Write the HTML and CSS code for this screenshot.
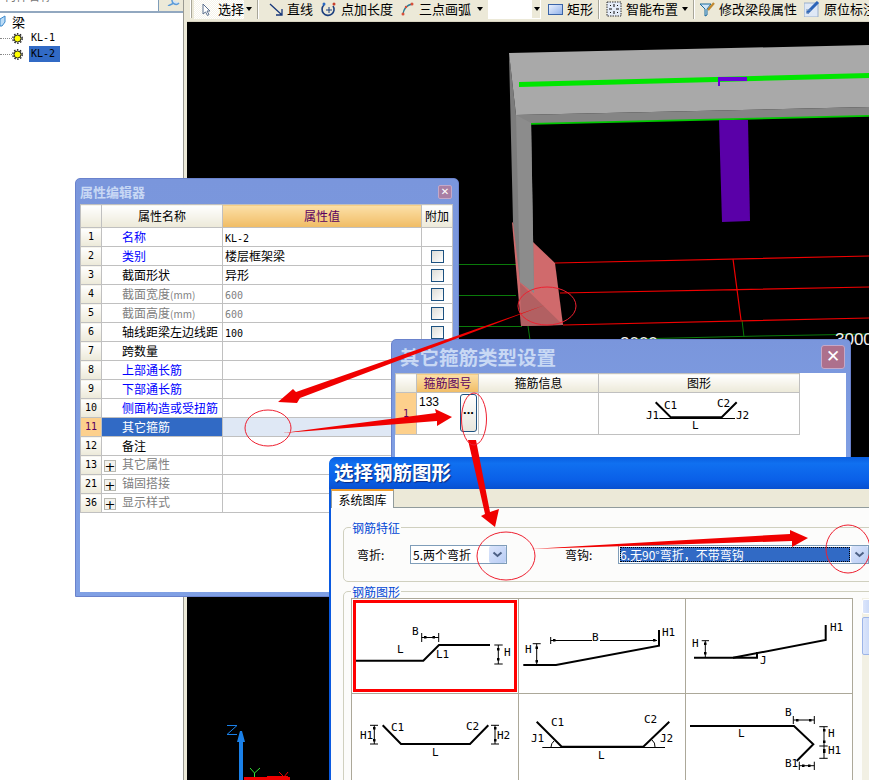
FILE: index.html
```html
<!DOCTYPE html>
<html lang="zh">
<head>
<meta charset="utf-8">
<title>属性编辑器</title>
<link rel="stylesheet" href="styles.css">
</head>
<body>
<div class="app">
  <aside class="side">
    <div class="search">
      <div class="search-input"><span class="search-text">构件名称</span></div>
      <div class="search-btn">
        <svg class="mag" width="16" height="6" viewBox="0 0 16 6"><path d="M7 0a4 4 0 0 0 7 3M9 3L3 6" fill="#cfe2f8" stroke="#5b9bd8" stroke-width="1.5"/></svg>
      </div>
    </div>
    <div class="tree">
      <div class="tree-row root">
        <svg class="root-icon" width="6" height="12" viewBox="0 0 6 12"><path d="M0 4l5-3v6l-3 4H0z" fill="#bcdcf6" stroke="#3a88cc"/></svg>
        <span>梁</span>
      </div>
      <div class="tree-row">
        <span class="dots"></span>
        <svg width="11" height="11" viewBox="0 0 11 11"><circle cx="5.500" cy="5.500" r="3.500" fill="#ffff00" stroke="#222"/><circle cx="5.500" cy="5.500" r="4.700" fill="none" stroke="#222" stroke-width="1.400" stroke-dasharray="1.500 1.500"/></svg>
        <span class="leaf lat">KL-1</span>
      </div>
      <div class="tree-row">
        <span class="dots"></span>
        <svg width="11" height="11" viewBox="0 0 11 11"><circle cx="5.500" cy="5.500" r="3.500" fill="#ffff00" stroke="#222"/><circle cx="5.500" cy="5.500" r="4.700" fill="none" stroke="#222" stroke-width="1.400" stroke-dasharray="1.500 1.500"/></svg>
        <span class="leaf picked lat">KL-2</span>
      </div>
    </div>
  </aside>
  <main class="main">
    <div class="toolbar">
      <span class="grip"></span>
      <span class="tool-select">
        <svg width="9" height="13" viewBox="0 0 9 13"><path d="M1 1v10l2.500-2 2 3.500 1.500-1-2-3.500h3z" fill="#fff" stroke="#5a6e8c"/></svg>
        <span class="tl">选择</span>
      </span>
      <span class="caret c-select"></span>
      <span class="sep s1"></span>
      <span class="tool t-line">
        <svg width="14" height="13" viewBox="0 0 14 13"><path d="M1 1l12 11M13 6v6H7" fill="none" stroke="#17377a" stroke-width="1.300"/></svg>
        <span class="tl">直线</span>
      </span>
      <span class="tool t-len">
        <svg width="16" height="15" viewBox="0 0 16 15"><path d="M3 3a6 6 0 1 0 9 1" fill="none" stroke="#1c3f7e" stroke-width="1.600"/><path d="M5 8h6M8 5v6" stroke="#1c3f7e"/><circle cx="3" cy="2" r="1.500" fill="#2b6cc4"/><circle cx="13" cy="2" r="1.500" fill="#c8402c"/></svg>
        <span class="tl">点加长度</span>
      </span>
      <span class="tool t-arc">
        <svg width="13" height="14" viewBox="0 0 13 14"><path d="M2 12C3 6 6 3 11 2" fill="none" stroke="#2c7c94" stroke-width="1.300"/><circle cx="2" cy="12" r="1.500" fill="#d8503c"/><circle cx="5" cy="5" r="1.200" fill="#d8503c"/><circle cx="11" cy="2" r="1.500" fill="#d8503c"/></svg>
        <span class="tl tl-arc">三点画弧</span>
      </span>
      <span class="caret c-arc"></span>
      <span class="tool-combo"><span class="combo-fill"></span><span class="caret"></span></span>
      <span class="tool t-rect">
        <svg width="15" height="11" viewBox="0 0 15 11"><defs><linearGradient id="rectfill" x1="0" y1="0" x2="1" y2="1"><stop offset="0" stop-color="#eef3fd"/><stop offset="1" stop-color="#8fb0ea"/></linearGradient></defs><rect x=".5" y=".5" width="14" height="10" fill="url(#rectfill)" stroke="#3a64a8"/></svg>
        <span class="tl">矩形</span>
      </span>
      <span class="sep s2"></span>
      <span class="tool t-smart">
        <svg width="16" height="16" viewBox="0 0 16 16"><rect x="1" y="1" width="14" height="14" fill="#e4ecf8" stroke="#333" stroke-dasharray="1.500 1"/><path d="M8 3v3M8 10v3M3 8h3M10 8h3M4 4l1 1M12 4l-1 1M4 12l1-1M12 12l-1-1" stroke="#111"/></svg>
        <span class="tl">智能布置</span>
      </span>
      <span class="caret c-smart"></span>
      <span class="sep s3"></span>
      <span class="tool t-edit">
        <svg width="16" height="16" viewBox="0 0 16 16"><path d="M1 3h11L8 8v6L6 15V8z" fill="#cfe6f8" stroke="#1a6a9a"/><path d="M9 9l6-7" stroke="#c08830" stroke-width="2.200"/></svg>
        <span class="tl">修改梁段属性</span>
      </span>
      <span class="tool t-note">
        <svg width="16" height="16" viewBox="0 0 16 16"><rect x="0" y="2" width="14" height="14" fill="#dfe8f6" stroke="#9ab0cc"/><path d="M3 12L14 1" stroke="#2c64b8" stroke-width="3"/><path d="M2 9h5M2 12h3" stroke="#7090b8"/></svg>
        <span class="tl">原位标注</span>
      </span>
    </div>
    <div class="viewport">
      <svg class="scene" viewBox="187 22 682 758" preserveAspectRatio="xMinYMin slice">
        <g fill="none" stroke="#0a7a0a">
          <path d="M459 264.500H516M459 295.500H516M459 326.500H522M528 326l2 14M742 320l2 17M633 339L760 336L869 334"/>
        </g>
        <g fill="none" stroke="#f00000" stroke-width="1.200">
          <path d="M555 263L869 256M560 293L869 287M563 325L869 318M733 259L741 320"/>
        </g>
        <polygon class="pink" points="512,222 533,242 555,263 563,325 521,326"/>
        <polygon class="pink-dark" points="520,283 563,325 521,326"/>
        <polygon class="col-side" points="509,53 516,115 531,123 534,293 520,282 513,222"/>
        <polygon class="col-front" points="516,115 531,115 534,293 520,282"/>
        <path d="M531 123.500L869 115.500" stroke="#00c800" stroke-width="2.500"/>
        <polygon class="beam-under" points="516,115 869,107 869,115 531,123"/>
        <polygon class="beam-top" points="509,53 869,45 869,107 516,115"/>
        <polygon class="bar-green" points="519,82 869,73 869,78 519,87"/>
        <polygon class="bar-purple" points="718,77 747,77 747,81 720,81 720,86 718,86"/>
        <polygon class="col-purple" points="719,120 748,120 750,221 722,222"/>
        <text class="dim-num" x="620" y="349">3000</text>
        <text class="dim-num" x="835" y="345">3000</text>
        <g>
          <path class="axis-blue" d="M239 780V742H237L240 731H242L245 742H243V780Z"/>
          <path class="axis-z" d="M227 725.500H237L227 734.500H237" fill="none"/>
          <path d="M250 768L254.500 773L260 768M254.500 773V777" fill="none" stroke="#33e033"/>
          <path d="M244 777H267V776H288V777H290V780H244Z" fill="#f00000"/>
          <path d="M279 772L284 777L288 772" fill="none" stroke="#f00000"/>
        </g>
      </svg>
    </div>
  </main>
</div>

<section class="win win-props">
  <header class="win-title">
    <h1>属性编辑器</h1>
    <span class="close small">✕</span>
  </header>
  <div class="win-body">
    <table class="grid props">
      <colgroup><col class="c-num"><col class="c-name"><col class="c-val"><col class="c-add"></colgroup>
      <thead>
        <tr><th></th><th>属性名称</th><th class="hot">属性值</th><th>附加</th></tr>
      </thead>
      <tbody>
        <tr><th class="lat">1</th><td class="name blue">名称</td><td><span class="lat">KL-2</span></td><td></td></tr>
        <tr><th class="lat">2</th><td class="name blue">类别</td><td>楼层框架梁</td><td><span class="check"></span></td></tr>
        <tr><th class="lat">3</th><td class="name">截面形状</td><td>异形</td><td><span class="check"></span></td></tr>
        <tr><th class="lat">4</th><td class="name gray">截面宽度<span class="unit">(mm)</span></td><td class="gray"><span class="lat">600</span></td><td><span class="check"></span></td></tr>
        <tr><th class="lat">5</th><td class="name gray">截面高度<span class="unit">(mm)</span></td><td class="gray"><span class="lat">600</span></td><td><span class="check"></span></td></tr>
        <tr><th class="lat">6</th><td class="name">轴线距梁左边线距</td><td><span class="lat">100</span></td><td><span class="check"></span></td></tr>
        <tr><th class="lat">7</th><td class="name">跨数量</td><td></td><td></td></tr>
        <tr><th class="lat">8</th><td class="name blue">上部通长筋</td><td></td><td></td></tr>
        <tr><th class="lat">9</th><td class="name blue">下部通长筋</td><td></td><td></td></tr>
        <tr><th class="lat">10</th><td class="name blue">侧面构造或受扭筋</td><td></td><td></td></tr>
        <tr class="current"><th class="lat">11</th><td class="name">其它箍筋</td><td></td><td></td></tr>
        <tr><th class="lat">12</th><td class="name">备注</td><td></td><td></td></tr>
        <tr><th class="lat">13</th><td class="group-name gray"><span class="plus">+</span>其它属性</td><td></td><td></td></tr>
        <tr><th class="lat">21</th><td class="group-name gray"><span class="plus">+</span>锚固搭接</td><td></td><td></td></tr>
        <tr><th class="lat">36</th><td class="group-name gray"><span class="plus">+</span>显示样式</td><td></td><td></td></tr>
      </tbody>
    </table>
  </div>
</section>

<section class="win win-type">
  <header class="win-title">
    <h1>其它箍筋类型设置</h1>
    <span class="close big">✕</span>
  </header>
  <div class="win-body">
    <table class="grid types">
      <colgroup><col class="c-num"><col class="c-no"><col class="c-info"><col class="c-shape"></colgroup>
      <thead>
        <tr><th></th><th class="hot">箍筋图号</th><th>箍筋信息</th><th>图形</th></tr>
      </thead>
      <tbody>
        <tr>
          <th class="row-hot lat">1</th>
          <td class="no-cell"><span class="no">133</span><span class="more">...</span></td>
          <td></td>
          <td class="shape-cell">
            <svg class="shape" viewBox="599 393 200 41">
              <path class="bar" d="M655.700 402.300L670.700 417.300H721.700L736.700 402.300"/>
              <path class="thin" d="M659.300 418.500H735"/>
              <text x="664" y="409">C1</text><text x="717" y="407">C2</text>
              <text x="646" y="419">J1</text><text x="736" y="419">J2</text><text x="692" y="429">L</text>
            </svg>
          </td>
        </tr>
      </tbody>
    </table>
  </div>
</section>

<section class="win-xp">
  <header class="xp-title"><h1>选择钢筋图形</h1></header>
  <div class="xp-body">
    <nav class="tabs"><span class="tab">系统图库</span></nav>
    <div class="pane">
      <div class="box box-feature">
        <span class="legend">钢筋特征</span>
        <div class="fields">
          <label class="f-label">弯折:</label>
          <span class="combo c1"><span class="combo-val">5.两个弯折</span><span class="drop"><svg width="11" height="7" viewBox="0 0 11 7"><path d="M1.500 1.500l4 3.500 4-3.500" fill="none" stroke="#4d6185" stroke-width="2"/></svg></span></span>
          <label class="f-label l2">弯钩:</label>
          <span class="combo c2"><span class="combo-val sel-val">6.无90°弯折，不带弯钩</span><span class="drop"><svg width="11" height="7" viewBox="0 0 11 7"><path d="M1.500 1.500l4 3.500 4-3.500" fill="none" stroke="#4d6185" stroke-width="2"/></svg></span></span>
        </div>
      </div>
      <div class="box box-shapes">
        <span class="legend">钢筋图形</span>
        <div class="shape-area">
          <div class="shape-grid">
            <div class="cell sel">
              <svg class="shape" viewBox="352 599 166 94">
                <path class="bar" d="M356 660.700H423.300L439 645H490"/>
                <path class="thin" d="M421.700 633V642M438.700 633V642M421.700 637.500H438.700M494.300 645H502.700M494.300 664H502.700M498.300 645V664"/>
                <path class="dot" d="M424 636h2.500v2.500H424zM432.500 636h2.500v2.500h-2.500zM497 648h2.500v2.500H497zM497 658h2.500v2.500H497z"/>
                <text x="397" y="653">L</text><text x="412" y="635">B</text><text x="436" y="658">L1</text><text x="504" y="656">H</text>
              </svg>
            </div>
            <div class="cell">
              <svg class="shape" viewBox="519 599 166 94">
                <path class="bar" d="M523.300 665H556L659 645.700V630"/>
                <path class="thin" d="M550.700 637V644M550.700 640.500H592M600 640.500H657M532.700 643.700H540.700M536.700 643.700V664"/>
                <path class="dot" d="M553 639h2.500v2.500H553zM653 639h2.500v2.500H653zM535.500 646.500H538V649h-2.500zM535.500 660H538v2.500h-2.500z"/>
                <text x="592" y="641">B</text><text x="662" y="636">H1</text><text x="525" y="653">H</text>
              </svg>
            </div>
            <div class="cell">
              <svg class="shape" viewBox="686 599 166 94">
                <path class="bar" d="M694 657.700H733L825.700 640V625"/>
                <path class="bar" d="M733 657.700H757V652"/>
                <path class="thin" d="M701.700 640.700H709M705.300 640.700V657"/>
                <path class="dot" d="M704 642.500h2.500V645H704zM704 652h2.500v2.500H704z"/>
                <text x="692" y="647">H</text><text x="830" y="631">H1</text><text x="760" y="664">J</text>
              </svg>
            </div>
            <div class="cell">
              <svg class="shape" viewBox="352 694 166 94">
                <path class="bar" d="M382.700 725.300L401 744H470L488.300 725.300"/>
                <path class="thin" d="M370 725.300H378M370 744H378M374.300 725.300V744M491 725.300H499M491 744H499M495 725.300V744"/>
                <path class="dot" d="M373 727h2.500v2.500H373zM373 739h2.500v2.500H373zM494 727h2.500v2.500H494zM494 739h2.500v2.500H494z"/>
                <text x="360" y="739">H1</text><text x="391" y="731">C1</text><text x="466" y="730">C2</text><text x="497" y="739">H2</text><text x="432" y="756">L</text>
              </svg>
            </div>
            <div class="cell">
              <svg class="shape" viewBox="519 694 166 94">
                <path class="bar" d="M536.700 721.700L561.700 746.700H643.300L669.300 721.700"/>
                <path class="thin" d="M542.300 747.500H665M551 747a8 8 0 0 1 3-6M652 740a8 8 0 0 1 3 7"/>
                <text x="551" y="726">C1</text>
                <text x="644" y="723">C2</text><text x="531" y="742">J1</text><text x="660" y="742">J2</text><text x="598" y="759">L</text>
              </svg>
            </div>
            <div class="cell">
              <svg class="shape" viewBox="686 694 166 94">
                <path class="bar" d="M690 726H794L813.300 744.300L796.700 761"/>
                <path class="thin" d="M793.300 716V724M814.300 716V724M793.300 720H814.300M819.300 726.700H827.700M819.300 746H827.700M819.300 758.300H827.700M824 726.700V758.300M799.300 761.700V770M814.300 761.700V770M799.300 765.700H814.300"/>
                <path class="dot" d="M796 719h2.500v2.500H796zM809 719h2.500v2.500H809zM823 729h2.500v2.500H823zM823 740.500h2.500v2.500H823zM823 749h2.500v4H823zM802 764.500h2.500v2.500H802zM808 764.500h2.500v2.500H808z"/>
                <text x="785" y="716">B</text><text x="738" y="737">L</text><text x="828" y="737">H</text><text x="828" y="754">H1</text><text x="785" y="767">B1</text>
              </svg>
            </div>
          </div>
          <div class="scrollbar"><span class="sb-up"></span><span class="sb-thumb"></span></div>
        </div>
      </div>
    </div>
  </div>
</section>

<svg class="notes" viewBox="0 0 869 780">
  <polygon points="278,402 293,389 296,392 545,305 300,398 297,403"/>
  <polygon points="283,433 436,413 435,409 452,417 437,426 437,421"/>
  <polygon points="468,440 476,440 490,512 499,509 495,527 481,516 485,514"/>
  <polygon points="530,549 790,534 790,530 808,538 792,547 792,541"/>
  <ellipse cx="547" cy="306" rx="29" ry="19"/>
  <ellipse cx="268" cy="428" rx="23" ry="18"/>
  <ellipse cx="474" cy="419" rx="12.500" ry="26"/>
  <ellipse cx="506" cy="556" rx="29" ry="24"/>
  <ellipse cx="848" cy="549" rx="22" ry="24"/>
</svg>
</body>
</html>
```

FILE: styles.css
```css
* { box-sizing: border-box; }
html, body { margin: 0; padding: 0; width: 869px; height: 780px; overflow: hidden; }
body {
  position: relative;
  background: #fff;
  font: 12px/1 "Noto Sans CJK SC", "Liberation Sans", sans-serif;
  color: #000;
}
h1 { margin: 0; font-weight: 700; }
.lat { font-family: "DejaVu Sans Mono", "Liberation Mono", monospace; font-size: 10px; }

.app { display: flex; width: 869px; height: 780px; }

/* left tree */
.side { width: 187px; display: flex; flex-direction: column; background: #fff; border-right: 3px solid #ece9d8; box-shadow: inset -1px 0 0 #9a9a92; }
.search { display: flex; height: 13px; border-bottom: 2px solid #92a8c0; margin-right: 1px; }
.search-input { width: 159px; overflow: hidden; border-right: 1px solid #7f9db9; }
.search-text { display: block; margin: -10px 0 0 4px; line-height: 12px; color: #777; }
.search-btn { flex: 1; background: #ece9d8; overflow: hidden; padding-left: 6px; }
.mag { display: block; }
.tree { font-size: 13px; }
.tree-row { display: flex; align-items: center; height: 16px; }
.tree-row.root { margin-bottom: 1px; }
.tree-row.root span { margin-left: 6px; }
.dots { width: 12px; border-top: 1px dotted #888; }
.leaf { margin-left: 6px; padding: 3px 2px; line-height: 10px; }
.picked { background: #316ac5; width: 31px; height: 16px; }

/* toolbar */
.main { flex: 1; display: flex; flex-direction: column; min-width: 0; }
.toolbar { height: 22px; flex: none; padding-bottom: 3px; display: flex; align-items: center; background: #ece9d8; border-bottom: 1px solid #d8d4c2; font-size: 13px; white-space: nowrap; overflow: hidden; }
.grip { width: 3px; height: 18px; margin-left: 3px; border-left: 1px solid #fff; border-right: 1px solid #a8a699; }
.tool-select { display: flex; align-items: center; width: 53px; height: 19px; margin-left: 2px; padding-left: 8px; background: repeating-conic-gradient(#f5f3ea 0 25%, #fff 0 50%) 0 0 / 2px 2px; }
.tool-select .tl { margin-left: 7px; }
.tool { display: flex; align-items: center; flex: none; }
.tl { margin-left: 4px; line-height: 18px; }
.tl-arc { margin-left: 5px; }
.caret { display: block; width: 0; height: 0; flex: none; border: 3px solid transparent; border-top: 4px solid #000; border-bottom: 0; }
.c-select { margin-left: 2px; }
.c-arc { margin-left: 6px; }
.c-smart { margin-left: 4px; }
.sep { flex: none; width: 2px; height: 20px; border-left: 1px solid #a8a699; border-right: 1px solid #fff; }
.s1 { margin-left: 5px; }
.s2 { margin-left: 5px; }
.s3 { margin-left: 5px; }
.t-line { margin-left: 10px; }
.t-len { margin-left: 8px; }
.t-arc { margin-left: 8px; }
.t-rect { margin-left: 7px; }
.t-smart { margin-left: 6px; }
.t-edit { margin-left: 4px; }
.t-note { margin-left: 7px; }
.tool-combo { display: flex; align-items: center; width: 54px; height: 19px; margin-left: 5px; background: #ece9d8; border-right: 1px solid #fff; border-bottom: 1px solid #fff; }
.combo-fill { width: 44px; height: 19px; background: #fff; }
.tool-combo .caret { margin-left: 2px; }

/* 3D viewport */
.viewport { flex: 1; background: #000; min-height: 0; }
.scene { display: block; width: 682px; height: 758px; }
.pink { fill: #d06a6c; }
.pink-dark { fill: #b26062; }
.col-side { fill: #7c7c7c; }
.col-front { fill: #8c8c8c; }
.beam-under { fill: #858585; }
.beam-top { fill: #a9a9a9; }
.bar-green { fill: #00e600; }
.bar-purple { fill: #6a00d8; }
.col-purple { fill: #5a00a8; }
.dim-num { fill: #f0f0f0; font: 17px "Liberation Sans", sans-serif; }
.axis-blue { fill: #1a80e8; }
.axis-z { stroke: #1a80e8; stroke-width: 1; }

/* translucent windows */
.win { position: absolute; display: flex; flex-direction: column; background: linear-gradient(#7a96dc, #80a0e4); border: 1px solid #6a82cc; border-radius: 5px 5px 0 0; }
.win-title { display: flex; align-items: center; justify-content: space-between; flex: none; color: #c8d8f4; }
.win-body { flex: 1; background: #fff; }
.close { display: flex; align-items: center; justify-content: center; color: #fff; font-family: "DejaVu Sans", sans-serif; font-weight: 700; background: #a97fa4; border: 1px solid #c4a8c8; }
.close.small { width: 14px; height: 14px; font-size: 10px; border-radius: 2px; }
.close.big { width: 24px; height: 24px; font-size: 17px; border-radius: 3px; background: #ad708c; }

.win-props { left: 75px; top: 178px; width: 384px; height: 419px; padding: 0 5px 4px 4px; }
.win-props .win-title { height: 25px; }
.win-props h1 { font-size: 13px; }
.win-props .close { margin-right: 1px; }

.win-type { left: 391px; top: 339px; width: 460px; height: 130px; padding: 0 4px 0 3px; }
.win-type .win-title { height: 33px; padding: 0 0 0 5px; }
.win-type h1 { font-size: 19.500px; }
.win-type .close { margin-right: 1px; }

/* data grids */
.grid { border-collapse: collapse; table-layout: fixed; }
.grid th, .grid td { border: 1px solid #c0c0c0; padding: 0; overflow: hidden; white-space: nowrap; font-weight: 400; }
.grid thead th { height: 23px; background: linear-gradient(#fff, #ece9d8); text-align: center; }
.grid thead th.hot { background: linear-gradient(#fce0a8, #f0bc64); color: #5a0060; }
.grid tbody th { background: linear-gradient(#fff, #ece9d8); text-align: center; }
.grid tbody td { padding-left: 2px; }
.props { width: 373px; }
.props tbody tr { height: 19px; }
.c-num { width: 21px; }
.c-name { width: 121px; }
.c-val { width: 199px; }
.c-add { width: 31px; }
.props tbody td.name { padding-left: 20px; }
.group-name { padding-left: 2px; }
.blue { color: #0000ff; }
.gray { color: #808080; }
.unit { font-size: 10px; }
.plus { display: inline-flex; align-items: center; justify-content: center; width: 12px; height: 12px; margin-right: 6px; background: #f4f3ee; border: 1px solid #b8b8b0; color: #000; font: 13px/1 "DejaVu Sans", sans-serif; vertical-align: -2px; }
.check { display: block; width: 13px; height: 13px; margin-left: 7px; border: 1px solid #1c5180; background: linear-gradient(135deg, #dcdcd7, #fff); }
.current th { background: #fdd08c !important; color: #5a0060; }
.current td.name { background: #316ac5; color: #fff; }
.current td { background: #dfe8f5; }

.types { width: 405px; }
.c-no { width: 62px; }
.c-info { width: 120px; }
.c-shape { width: 201px; }
.types thead th { height: 19px; }
.types tbody tr { height: 42px; }
.grid tbody th.row-hot { background: #fdd08c; color: #5a0060; vertical-align: bottom; padding-bottom: 15px; }
.no-cell { position: relative; vertical-align: top; }
.no { display: block; padding-top: 2px; font: 12px "Liberation Sans", sans-serif; }
.more { position: absolute; left: 43px; top: 1px; width: 17px; height: 38px; display: flex; align-items: center; justify-content: center; padding-bottom: 8px; border: 1px solid #1c5180; border-radius: 3px; background: linear-gradient(#fff, #e8e6dc); font: 700 13px "Liberation Sans", sans-serif; }
.types tbody td.shape-cell { padding: 0; }
.shape { display: block; width: 100%; height: 100%; }
.shape text { font: 11px "DejaVu Sans Mono", "Liberation Mono", monospace; fill: #000; }
.bar { fill: none; stroke: #000; stroke-width: 2; }
.thin { fill: none; stroke: #000; stroke-width: 1; }
.dot { fill: #000; }

/* XP dialog */
.win-xp { position: absolute; left: 329px; top: 457px; width: 560px; height: 323px; overflow: hidden; display: flex; flex-direction: column; border-radius: 7px 7px 0 0; background: #0a5ae0; padding: 0 0 0 2px; }
.xp-title { flex: none; height: 32px; display: flex; align-items: center; padding: 0 0 2px 5px; background: linear-gradient(#0a5ee0 0, #1070f0 20%, #0a60e8 70%, #0850d0 100%); border-radius: 7px 7px 0 0; margin-left: -2px; }
.xp-title h1 { font-size: 19.500px; color: #fff; text-shadow: 1px 1px 1px #0a2a80; }
.xp-body { flex: 1; min-height: 0; background: #fff; overflow: hidden; }
.tabs { height: 19px; background: #ece9d8; border-bottom: 1px solid #919b9c; }
.tab { display: block; width: 63px; height: 19px; padding-top: 3px; text-align: center; background: #fff; border-top: 2px solid #f0a030; border-left: 1px solid #919b9c; border-right: 1px solid #919b9c; }
.pane { padding: 19px 0 0 12px; background: #fcfcfb; height: 300px; }
.box { position: relative; border: 1px solid #d0d0bf; border-radius: 5px; }
.legend { position: absolute; top: -7px; left: 7px; padding: 0 1px; background: #fcfcfb; color: #0046d5; line-height: 13px; }
.box-feature { height: 55px; margin-bottom: 9px; }
.fields { display: flex; align-items: center; height: 19px; margin-top: 17px; padding-left: 13px; }
.f-label { width: 53px; }
.f-label.l2 { width: 53px; margin-left: 58px; }
.combo { display: flex; align-items: center; height: 19px; background: #fff; border: 1px solid #7f9db9; flex: none; }
.combo.c1 { width: 97px; }
.combo.c2 { width: 251px; }
.combo-val { flex: 1; padding-left: 2px; line-height: 15px; white-space: nowrap; overflow: hidden; }
.sel-val { margin: 1px; height: 15px; padding-left: 0; background: #316ac5; color: #fff; outline: 1px dotted #000; outline-offset: -1px; }
.drop { flex: none; width: 17px; height: 17px; display: flex; align-items: center; justify-content: center; background: linear-gradient(135deg, #dbe5fb, #b8ccf4); border-radius: 2px; }
.box-shapes { height: 260px; padding: 6px 0 0 7px; }
.shape-area { display: flex; }
.shape-grid { display: grid; grid-template-columns: repeat(3, 167px); grid-auto-rows: 95px; border-top: 1px solid #aca899; border-left: 1px solid #aca899; background: #fff; }
.cell { border-right: 1px solid #aca899; border-bottom: 1px solid #aca899; overflow: hidden; }
.cell.sel svg { outline: 3px solid #f00; outline-offset: -4px; }
.scrollbar { width: 17px; margin-left: 9px; background: #f2f0e4; display: flex; flex-direction: column; gap: 3px; padding-top: 1px; height: 240px; }
.sb-up { height: 15px; background: linear-gradient(90deg, #dbe5fb, #b8ccf4); border: 1px solid #fff; border-radius: 2px; }
.sb-thumb { height: 38px; background: linear-gradient(90deg, #dbe5fb, #b8ccf4); border: 1px solid #9cb4e8; border-radius: 2px; }

/* annotations */
.notes { position: absolute; left: 0; top: 0; width: 869px; height: 780px; pointer-events: none; }
.notes polygon { fill: #f00000; }
.notes ellipse { fill: none; stroke: #ee2030; stroke-width: 1; }
```
